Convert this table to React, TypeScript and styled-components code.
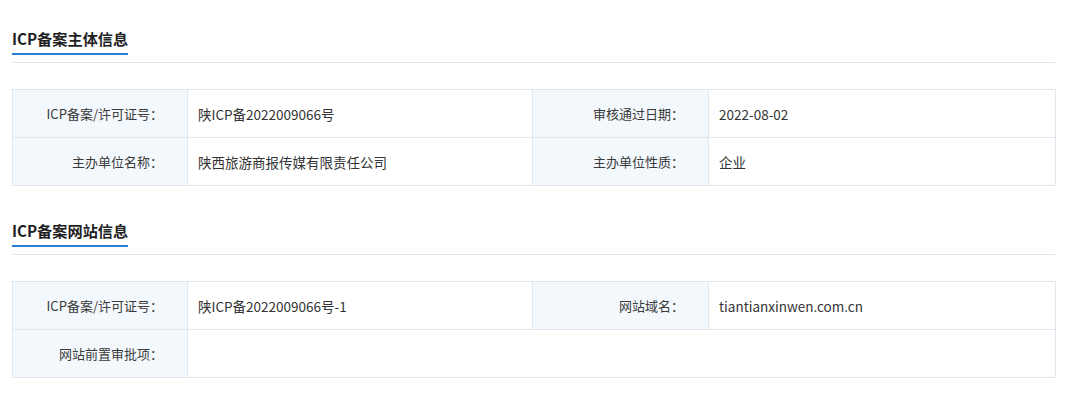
import React from 'react'
import styled, { createGlobalStyle } from 'styled-components'

const GlobalStyle = createGlobalStyle`
  html, body {
    margin: 0;
    padding: 0;
    background: #fff;
  }
  body {
    font-family: "Noto Sans CJK SC", "Noto Sans", sans-serif;
    color: #333;
  }
`

const Page = styled.div`
  width: 1043px;
  padding: 0 12px;
`

const Section = styled.section`
  margin-bottom: 6px;
`

const Header = styled.div`
  display: flex;
  padding-top: 27px;
  padding-bottom: 7px;
  border-bottom: 1px solid #dde6ef;
`

const Title = styled.h3`
  margin: 0;
  padding-bottom: 4px;
  font-size: 15.2px;
  line-height: 22px;
  font-weight: 700;
  color: #1f1f1f;
  border-bottom: 2px solid #2b7fd4;
`

const Table = styled.table`
  width: 1044px;
  margin-top: 26px;
  border-collapse: collapse;
  table-layout: fixed;
`

const Label = styled.td`
  height: 48px;
  padding: 0 24px 0 0;
  box-sizing: border-box;
  text-align: right;
  vertical-align: middle;
  font-size: 13px;
  background: #f3f8fd;
  border: 1px solid #e0e7ef;
  color: #3a3a3a;
`

const Value = styled.td`
  height: 48px;
  padding: 0 10px;
  box-sizing: border-box;
  vertical-align: middle;
  font-size: 13.5px;
  background: #fff;
  border: 1px solid #e0e7ef;
  color: #333;
`

type Cell = { label: string; value: string }

const InfoTable: React.FC<{ rows: Cell[][] }> = ({ rows }) => (
  <Table>
    <colgroup>
      <col style={{ width: 175 }} />
      <col style={{ width: 345 }} />
      <col style={{ width: 176 }} />
      <col />
    </colgroup>
    <tbody>
      {rows.map((row, i) => (
        <tr key={i}>
          {row.map((cell, j) => (
            <React.Fragment key={j}>
              <Label>{cell.label}</Label>
              <Value colSpan={row.length === 1 ? 3 : 1}>{cell.value}</Value>
            </React.Fragment>
          ))}
        </tr>
      ))}
    </tbody>
  </Table>
)

const subjectRows: Cell[][] = [
  [
    { label: 'ICP备案/许可证号：', value: '陕ICP备2022009066号' },
    { label: '审核通过日期：', value: '2022-08-02' },
  ],
  [
    { label: '主办单位名称：', value: '陕西旅游商报传媒有限责任公司' },
    { label: '主办单位性质：', value: '企业' },
  ],
]

const siteRows: Cell[][] = [
  [
    { label: 'ICP备案/许可证号：', value: '陕ICP备2022009066号-1' },
    { label: '网站域名：', value: 'tiantianxinwen.com.cn' },
  ],
  [{ label: '网站前置审批项：', value: '' }],
]

const App: React.FC = () => (
  <>
    <GlobalStyle />
    <Page>
      <Section>
        <Header>
          <Title>ICP备案主体信息</Title>
        </Header>
        <InfoTable rows={subjectRows} />
      </Section>
      <Section>
        <Header>
          <Title>ICP备案网站信息</Title>
        </Header>
        <InfoTable rows={siteRows} />
      </Section>
    </Page>
  </>
)

export default App
